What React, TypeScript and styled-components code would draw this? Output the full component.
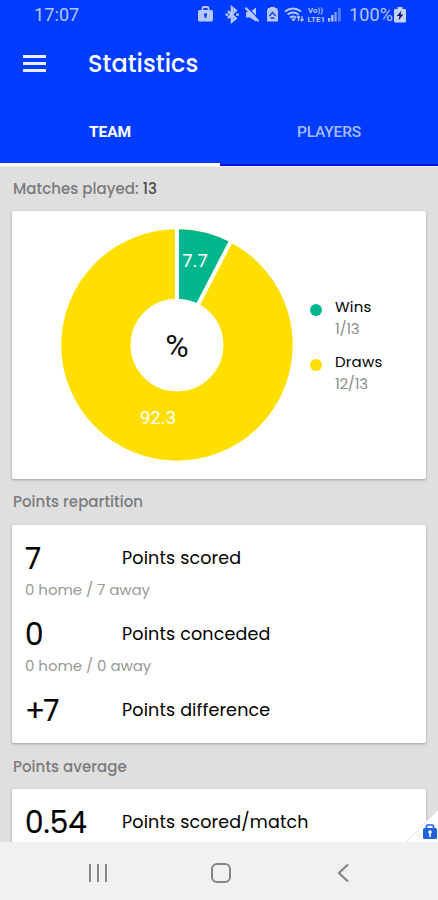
import React from "react";
import styled, { createGlobalStyle } from "styled-components";

const GlobalStyle = createGlobalStyle`
  * { box-sizing: border-box; }
  html, body { margin: 0; padding: 0; overflow: hidden; }
`;

const Screen = styled.div`
  width: 438px;
  height: 900px;
  display: flex;
  flex-direction: column;
  overflow: hidden;
  background: #dfdfdf;
  font-family: Poppins, Inter, "Open Sans", sans-serif;
  white-space: nowrap;
`;

const StatusBar = styled.div`
  height: 30px;
  flex: none;
  display: flex;
  align-items: center;
  justify-content: space-between;
  padding: 0 32px 0 34px;
  background: #003cff;
  color: #b6c6ff;
  font: 400 18px/30px Roboto, sans-serif;
`;

const Clock = styled.span`
  letter-spacing: 0.1px;
`;

const StatusIcons = styled.div`
  display: flex;
  align-items: center;
  svg { display: block; }
`;

const BatteryLevel = styled.span`
  width: 45px;
  margin-left: 5px;
  letter-spacing: 0.1px;
`;

const AppBar = styled.header`
  height: 67px;
  flex: none;
  display: flex;
  align-items: center;
  padding-left: 23px;
  background: #003cff;
`;

const Title = styled.h1`
  margin: 0 0 0 41px;
  color: #fff;
  font-size: 24px;
  font-weight: 500;
  line-height: 36px;
`;

const Tabs = styled.nav`
  height: 69px;
  flex: none;
  display: grid;
  grid-template-columns: 220px 218px;
  background: #003cff;
`;

const Tab = styled.div<{ $active?: boolean }>`
  display: flex;
  align-items: center;
  justify-content: center;
  padding-top: 3px;
  border-bottom: ${(p) => (p.$active ? "3px solid #fff" : "2px solid #0010e8")};
  color: ${(p) => (p.$active ? "#fff" : "#a9bcff")};
  font: ${(p) => (p.$active ? 700 : 500)} 15.5px/20px Roboto, sans-serif;
  letter-spacing: ${(p) => (p.$active ? "-0.1px" : "-0.15px")};
`;

const Content = styled.main`
  height: 676px;
  flex: none;
  overflow: hidden;
  padding: 0 12px;
  border-top: 1px solid #ececf2;
  position: relative;
`;

const SectionTitle = styled.h2<{ $lineHeight?: string }>`
  margin: 0;
  padding-left: 1px;
  height: 46px;
  color: #7b7b7b;
  font-size: 15px;
  font-weight: 500;
  line-height: ${(p) => p.$lineHeight ?? "46px"};
  letter-spacing: 0.05px;
`;

const Count = styled.span`
  color: #4c4c4c;
`;

const Card = styled.section`
  border-radius: 2px;
  background: #fff;
  box-shadow: 0 1px 3px rgba(0, 0, 0, 0.3);
`;

const ChartCard = styled(Card)`
  height: 268px;
  margin-top: -2px;
  display: flex;
  align-items: flex-start;
`;

const Donut = styled.svg`
  display: block;
  flex: none;
  width: 232px;
  height: 232px;
  margin: 18px 0 0 49px;
  font-family: Roboto, sans-serif;
`;

const Legend = styled.div`
  margin: 85px 0 0 17px;
  display: grid;
  row-gap: 12px;
`;

const LegendItem = styled.div`
  display: grid;
  grid-template-columns: 25px auto;
`;

const Dot = styled.i<{ $color: string }>`
  width: 12px;
  height: 12px;
  margin-top: 8px;
  border-radius: 50%;
  background: ${(p) => p.$color};
`;

const LegendName = styled.div`
  color: #000;
  font-size: 15px;
  font-weight: 400;
  line-height: 22px;
  letter-spacing: 0.2px;
`;

const LegendValue = styled.div`
  color: #8e8e8e;
  font-size: 15px;
  line-height: 21px;
  letter-spacing: -0.3px;
`;

const StatsCard = styled(Card)`
  padding: 11px 12px;
  display: flex;
  flex-direction: column;
  gap: 12px;
`;

const StatRow = styled.div`
  height: 44px;
  display: grid;
  grid-template-columns: 97px auto;
  align-items: center;
  padding-left: 1px;
`;

const StatValue = styled.strong<{ $tight?: boolean }>`
  height: 44px;
  color: #000;
  font-size: 29.5px;
  font-weight: 400;
  line-height: 46px;
  letter-spacing: ${(p) => (p.$tight ? "-2px" : "0")};
  -webkit-text-stroke: 0.2px #000;
`;

const StatLabel = styled.span`
  color: #000;
  font-size: 17.5px;
  font-weight: 400;
  letter-spacing: 0.16px;
`;

const StatDetail = styled.div`
  height: 20px;
  padding-left: 1px;
  color: #999;
  font-size: 15px;
  line-height: 20px;
  letter-spacing: -0.05px;
`;

const CornerBadge = styled.svg`
  position: absolute;
  right: 0;
  bottom: 0;
`;

const NavBar = styled.footer`
  height: 58px;
  flex: none;
  display: grid;
  grid-template-columns: 25px 146px 99px 146px;
  background: #f1f1f1;
`;

const NavButton = styled.div`
  display: flex;
  align-items: center;
  justify-content: center;
  padding-top: 3px;
`;

const YELLOW = "#ffdf00";
const GREEN = "#00b78d";

const MenuIcon = () => (
  <svg width="24" height="18" viewBox="0 0 24 18" stroke="#e9edff" strokeWidth="3">
    <path d="M0 1.500h23M0 8.500h23M0 15.500h23" />
  </svg>
);

const StatusGlyphs = () => (
  <svg width="147" height="20" viewBox="0 0 147 20" fill="none" stroke="#b6c6ff" strokeWidth="1.8">
    <g>
      <rect x="1" y="5" width="15" height="11.5" rx="1.5" fill="#b6c6ff" stroke="none" />
      <path d="M5.500 5V3.200a1.200 1.200 0 0 1 1.200-1.200h3.600a1.200 1.200 0 0 1 1.200 1.200V5" />
      <path d="M8.500 10v3M7 9.500h3" stroke="#003cff" strokeWidth="1.9" />
    </g>
    <path d="m31 6 7.700 7.400-3.800 3.100V2.500l3.800 3.100-7.700 7.600M28.500 9.600h2.900M39 9.600h2.900" strokeWidth="2.400" />
    <g>
      <path d="M49 7h4l6-4.500v14L53 12.500h-4z" fill="#b6c6ff" stroke="none" />
      <path d="m50 2 13 13.500" stroke="#003cff" strokeWidth="1.300" />
      <path d="m48.500 2.800 13 13.500" strokeWidth="2.300" />
    </g>
    <g>
      <path d="M71 3h2V2h5v1h2l1 3v10.500H70V6z" fill="#b6c6ff" stroke="none" />
      <path d="m72.300 11 3.200-3.500 3.200 3.500M73.500 13h4" stroke="#003cff" strokeWidth="1.300" />
    </g>
    <g>
      <path d="M88 6.500q8-6 16 0M90.500 9.500q5.500-4 11 0M93 12.500q3-2 6 0" strokeWidth="2" />
      <path d="m94 13.500 2.500 3 2.500-3z" fill="#b6c6ff" stroke="none" />
      <path d="M101.500 16v-5m-1.600 1.800 1.600-1.800 1.600 1.800M105 11v5m-1.600-1.800L105 16l1.600-1.800" strokeWidth="1.2" />
    </g>
    <g fill="#b6c6ff" stroke="none" fontFamily="Roboto" fontWeight="700" fontSize="7.500">
      <text x="111" y="8" textLength="15" lengthAdjust="spacingAndGlyphs">Vo))</text>
      <text x="110.500" y="17" textLength="17.500" lengthAdjust="spacingAndGlyphs">LTE1</text>
    </g>
    <g fill="#b6c6ff" stroke="none">
      <path d="M131 13h2.300v3.500H131zM134.200 10h2.300v6.500h-2.300z" />
      <path d="M137.400 7h2.300v9.500h-2.300z" opacity=".7" />
      <path d="M140.900 3h3v13.500h-3z" opacity=".45" />
    </g>
  </svg>
);

const BatteryIcon = () => (
  <svg width="12" height="16" viewBox="0 0 12 16">
    <path d="M3.500 0h5v2H11q1 0 1 1v11q0 1.500-1.500 1.500h-9Q0 15.500 0 14V3q0-1 1-1h2.500z" fill="#c5d1ff" />
    <path d="M7.500 3.500 2.800 9h2.700l-1 4.500L9.300 7.600H6.500z" fill="#06145c" />
  </svg>
);

const DonutChart = () => (
  <Donut viewBox="0 0 232 232">
    <circle cx="116" cy="116" r="81" fill="none" stroke={YELLOW} strokeWidth="69.500" />
    <path d="M116 116V.250A115.750 115.750 0 0 1 169.800 13.500z" fill={GREEN} />
    <path d="M116 116V-2M116 116 171 10" stroke="#fff" strokeWidth="4" />
    <circle cx="116" cy="116" r="46.300" fill="#fff" />
    <g fill="#fff" fontSize="18.500" textAnchor="middle">
      <text x="134" y="37.500">7.7</text>
      <text x="97" y="194.500">92.3</text>
    </g>
    <text x="116" y="127.500" fontSize="32" fill="#111" textAnchor="middle">%</text>
  </Donut>
);

const legend = [
  { name: "Wins", value: "1/13", color: GREEN },
  { name: "Draws", value: "12/13", color: YELLOW },
];

const repartition = [
  { value: "7", label: "Points scored", detail: "0 home / 7 away" },
  { value: "0", label: "Points conceded", detail: "0 home / 0 away" },
  { value: "+7", label: "Points difference" },
];

const StatBlock = ({ value, label, detail }: { value: string; label: string; detail?: string }) => (
  <div>
    <StatRow>
      <StatValue $tight={value.startsWith("+")}>{value}</StatValue>
      <StatLabel>{label}</StatLabel>
    </StatRow>
    {detail && <StatDetail>{detail}</StatDetail>}
  </div>
);

export default function App() {
  return (
    <>
      <GlobalStyle />
      <Screen>
        <StatusBar>
          <Clock>17:07</Clock>
          <StatusIcons>
            <StatusGlyphs />
            <BatteryLevel>100%</BatteryLevel>
            <BatteryIcon />
          </StatusIcons>
        </StatusBar>
        <AppBar>
          <MenuIcon />
          <Title>Statistics</Title>
        </AppBar>
        <Tabs>
          <Tab $active>TEAM</Tab>
          <Tab>PLAYERS</Tab>
        </Tabs>
        <Content>
          <SectionTitle $lineHeight="44px">
            Matches played: <Count>13</Count>
          </SectionTitle>
          <ChartCard>
            <DonutChart />
            <Legend>
              {legend.map((item) => (
                <LegendItem key={item.name}>
                  <Dot $color={item.color} />
                  <div>
                    <LegendName>{item.name}</LegendName>
                    <LegendValue>{item.value}</LegendValue>
                  </div>
                </LegendItem>
              ))}
            </Legend>
          </ChartCard>
          <SectionTitle>Points repartition</SectionTitle>
          <StatsCard>
            {repartition.map((stat) => (
              <StatBlock key={stat.label} {...stat} />
            ))}
          </StatsCard>
          <SectionTitle $lineHeight="48px">Points average</SectionTitle>
          <StatsCard>
            <StatBlock value="0.54" label="Points scored/match" />
          </StatsCard>
          <CornerBadge width="32" height="32" viewBox="0 0 32 32">
            <path d="M0 32 32 0v32z" fill="#fff" />
            <path d="M0 32 32 0" stroke="#e4e4e4" strokeWidth="1" />
            <rect x="17" y="18" width="14" height="11" rx="1.500" fill="#1f62dc" />
            <path d="M20.500 18v-1.500q0-1.500 1.500-1.500h4q1.500 0 1.500 1.500V18" fill="none" stroke="#1f62dc" strokeWidth="1.700" />
            <circle cx="24" cy="22" r="1.800" fill="#fff" />
            <path d="M24 22v5" stroke="#fff" strokeWidth="1.500" />
          </CornerBadge>
        </Content>
        <NavBar>
          <span />
          <NavButton>
            <svg width="20" height="20" stroke="#858585" strokeWidth="2">
              <path d="M2 1v18M10 1v18M18 1v18" />
            </svg>
          </NavButton>
          <NavButton>
            <svg width="22" height="22" fill="none" stroke="#858585" strokeWidth="2">
              <rect x="2" y="2" width="18" height="18" rx="5" />
            </svg>
          </NavButton>
          <NavButton>
            <svg width="12" height="20" fill="none" stroke="#858585" strokeWidth="2.200">
              <path d="M11 1.500 2 10l9 8.500" />
            </svg>
          </NavButton>
        </NavBar>
      </Screen>
    </>
  );
}
